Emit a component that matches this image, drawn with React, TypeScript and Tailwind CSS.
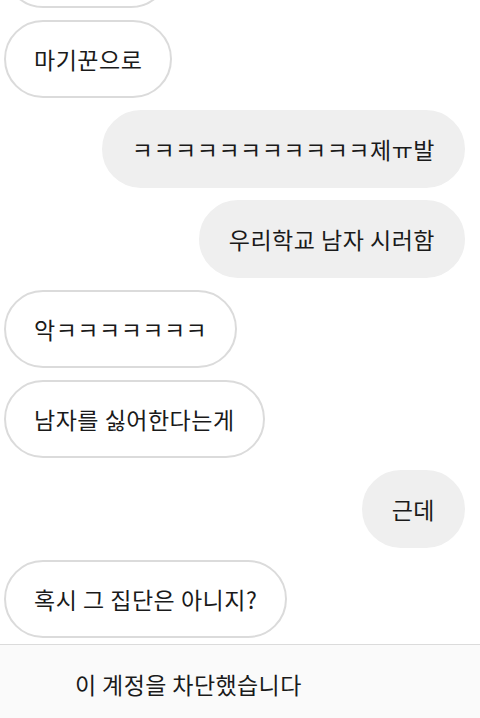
import React from 'react';

const messages = [
  { me: false, text: '마기꾼으로' },
  { me: true, text: 'ㅋㅋㅋㅋㅋㅋㅋㅋㅋㅋㅋ제ㅠ발' },
  { me: true, text: '우리학교 남자 시러함' },
  { me: false, text: '악ㅋㅋㅋㅋㅋㅋㅋ' },
  { me: false, text: '남자를 싫어한다는게' },
  { me: true, text: '근데' },
  { me: false, text: '혹시 그 집단은 아니지?' },
];

const Bubble = ({ me, text }: { me: boolean; text: string }) => (
  <div className={`flex ${me ? 'justify-end' : 'justify-start'}`}>
    <div
      className={`h-[78px] flex items-center rounded-full px-[28px] text-[23px] tracking-[0.5px] text-[#1a1a1a] whitespace-nowrap ${
        me ? 'bg-[#efefef] border-2 border-[#efefef]' : 'bg-white border-2 border-[#dbdbdb]'
      }`}
    >
      {text}
    </div>
  </div>
);

export default function App() {
  return (
    <div
      className="w-[480px] h-[718px] bg-white flex flex-col overflow-hidden"
      style={{ fontFamily: '"Noto Sans CJK KR", "Noto Sans", sans-serif' }}
    >
      <div className="flex-1 overflow-hidden px-[4px] pr-[15px]">
        <div className="flex flex-col gap-[12px] mt-[-70px]">
          {/* cut-off bubble at the top */}
          <div className="flex justify-start">
            <div className="h-[78px] w-[166px] rounded-full bg-white border-2 border-[#dbdbdb]"></div>
          </div>
          {messages.map((m, i) => (
            <Bubble key={i} me={m.me} text={m.text} />
          ))}
        </div>
      </div>
      <div className="h-[74px] shrink-0 border-t border-[#dbdbdb] bg-[#fafafa] flex items-center pt-[6px] pl-[75px] text-[23px] tracking-[0.4px] text-[#1a1a1a]">
        이 계정을 차단했습니다
      </div>
    </div>
  );
}
